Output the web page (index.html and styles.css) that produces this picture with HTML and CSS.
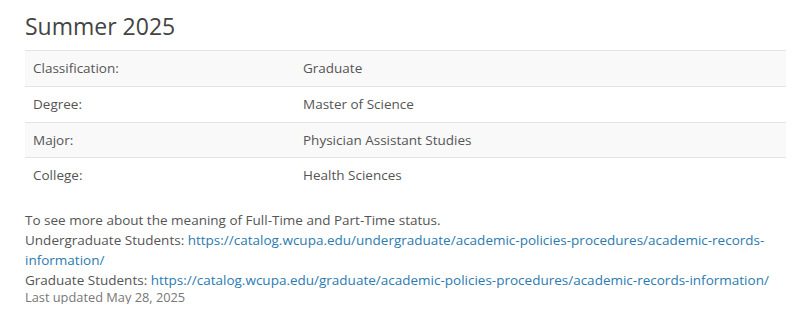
FILE: index.html
```html
<!DOCTYPE html>
<html lang="en">
<head>
    <meta charset="UTF-8">
    <title>Summer 2025</title>
    <link rel="stylesheet" href="styles.css">
</head>
<body>
    <div class="term">
        <h2 class="term-title">Summer 2025</h2>
        <table class="term-table">
            <tr>
                <td class="label">Classification:</td>
                <td>Graduate</td>
            </tr>
            <tr>
                <td class="label">Degree:</td>
                <td>Master of Science</td>
            </tr>
            <tr>
                <td class="label">Major:</td>
                <td>Physician Assistant Studies</td>
            </tr>
            <tr>
                <td class="label">College:</td>
                <td>Health Sciences</td>
            </tr>
        </table>

        <div class="status-note">
            To see more about the meaning of Full-Time and Part-Time status.<br>
            Undergraduate Students: <a href="#">https://catalog.wcupa.edu/undergraduate/academic-policies-procedures/academic-records-information/</a><br>
            Graduate Students: <a href="#">https://catalog.wcupa.edu/graduate/academic-policies-procedures/academic-records-information/</a>
        </div>
        <div class="updated">Last updated May 28, 2025</div>
    </div>
</body>
</html>
```

FILE: styles.css
```css
body {
    margin: 0;
    font-family: "Open Sans", Arial, sans-serif;
    font-size: 13.5px;
    color: #555;
    background: #fff;
}
.term {
    padding: 12px 15px 0 25px;
}
.term-title {
    margin: 0 0 10px 0;
    font-size: 23px;
    font-weight: 400;
    line-height: 28px;
    color: #444;
}
.term-table {
    width: 761px;
    border-collapse: collapse;
}
.term-table td {
    padding: 8px;
    line-height: 18.75px;
    border-top: 1px solid #e4e4e4;
    vertical-align: top;
}
.term-table .label {
    width: 254px;
}
.term-table tr:nth-child(odd) td {
    background: #f9f9f9;
}
.status-note {
    margin-top: 17px;
    line-height: 20px;
}
.status-note a {
    color: #2b7bb0;
    text-decoration: none;
}
.updated {
    font-size: 12.8px;
    color: #777;
    line-height: 14px;
}
```
